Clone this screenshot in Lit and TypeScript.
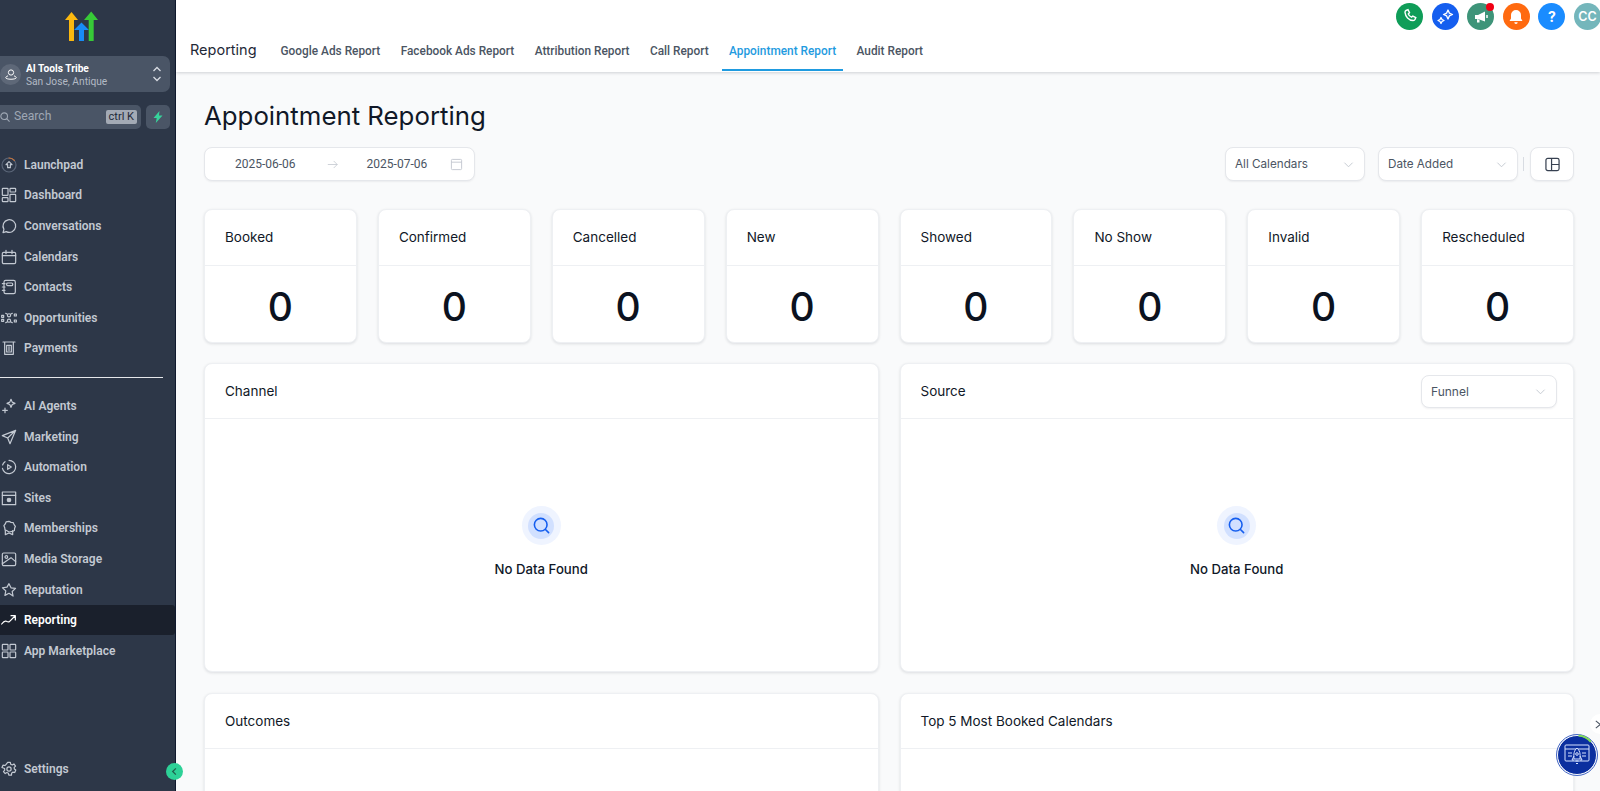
import { LitElement, html, css, svg } from 'lit';
import { customElement } from 'lit/decorators.js';

const ico = (body: unknown) => html`<svg class="ico" viewBox="0 0 24 24" fill="none" stroke="currentColor" stroke-width="1.8" stroke-linecap="round" stroke-linejoin="round">${body}</svg>`;

const topNav = [
  { label: 'Launchpad', icon: svg`<circle cx="12" cy="12" r="10.500" stroke="#5b6678"/><path d="M12 1.500a10.500 10.500 0 0 1 8 3.600" stroke="#c9743a"/><path d="M12 7l-4.500 4.500H10V16h4v-4.500h2.500z"/>` },
  { label: 'Dashboard', icon: svg`<rect x="2" y="2" width="8.500" height="10.500" rx="1"/><rect x="13.500" y="2" width="8.500" height="5.500" rx="1"/><rect x="2" y="16" width="8.500" height="6" rx="1"/><rect x="13.500" y="11" width="8.500" height="11" rx="1"/>` },
  { label: 'Conversations', icon: svg`<path d="M3 22l1.400-5A9.500 9.500 0 1 1 8 20.400z"/>` },
  { label: 'Calendars', icon: svg`<rect x="2" y="5" width="20" height="17" rx="2"/><path d="M2 10h20M7.500 2v5M16.500 2v5"/>` },
  { label: 'Contacts', icon: svg`<rect x="4.500" y="2" width="17" height="20" rx="2.500"/><rect x="8.500" y="6" width="9" height="4" rx="1.500"/><path d="M2 7h4M2 12h4M2 17h4"/>` },
  { label: 'Opportunities', icon: svg`<circle cx="12" cy="8" r="2.400"/><circle cx="12" cy="16" r="2.400"/><path d="M1 8h3v3H1zM1 14h3v3H1zM20 6h3v3h-3zM20 15h3v3h-3zM7 5l2 1M15 6l2-1M7 19l2-1M15 18l2 1"/>` },
  { label: 'Payments', icon: svg`<path d="M3 3h18M5.500 3v18.500h13V3"/><rect x="8.500" y="8" width="7" height="10"/><path d="M12 10v6"/>` },
];

const lowerNav = [
  { label: 'AI Agents', icon: svg`<path d="M15 2l1.800 4.200L21 8l-4.200 1.800L15 14l-1.800-4.200L9 8l4.200-1.800zM6 15v7M2.500 18.500h7"/>` },
  { label: 'Marketing', icon: svg`<path d="M22 2L2 10l8 3.500L13.500 22zM22 2L10 13.500"/>` },
  { label: 'Automation', icon: svg`<path d="M12 2a10 10 0 1 1-9.800 12M2.400 9A10 10 0 0 1 6 4"/><path d="M10 8.500l5.500 3.500-5.500 3.500z"/>` },
  { label: 'Sites', icon: svg`<rect x="2" y="3" width="20" height="19"/><path d="M2 8h20"/><circle cx="12" cy="15" r="2.600" fill="currentColor"/>` },
  { label: 'Memberships', icon: svg`<path d="M12 2l3 1.600 3.400.3 1.200 3 2 2.600-1.200 3-.3 3.300-3 1.400L12 18l-3-1.800-3-1.400-.4-3.300-1.200-3 2-2.600 1.200-3L12 2z"/><path d="M6.500 16v6l5.500-2.500L17.500 22v-6"/>` },
  { label: 'Media Storage', icon: svg`<rect x="2" y="3" width="20" height="19" rx="2"/><circle cx="8" cy="9" r="2"/><path d="M2 19l13-9 7 6"/>` },
  { label: 'Reputation', icon: svg`<path d="M12 2.500l3 6.200 6.800.9-5 4.700 1.300 6.800L12 17l-6.100 3.100 1.300-6.800-5-4.700 6.800-.9z"/>` },
  { label: 'Reporting', active: true, icon: svg`<path d="M1 18c3-4 5-5 7-4s3 2 5 0l8-8M15 5.500h6.500V12"/>` },
  { label: 'App Marketplace', icon: svg`<rect x="2" y="2" width="8.500" height="8.500" rx="1"/><rect x="13.500" y="2" width="8.500" height="8.500" rx="1"/><rect x="2" y="13.500" width="8.500" height="8.500" rx="1"/><rect x="13.500" y="13.500" width="8.500" height="8.500" rx="1"/>` },
];

const tabs = ['Google Ads Report', 'Facebook Ads Report', 'Attribution Report', 'Call Report', 'Appointment Report', 'Audit Report'];
const stats = ['Booked', 'Confirmed', 'Cancelled', 'New', 'Showed', 'No Show', 'Invalid', 'Rescheduled'];

const chevron = html`<svg class="chev" viewBox="0 0 12 12" fill="none" stroke="currentColor" stroke-width="1"><path d="M1.500 4l4.500 4.500L10.500 4"/></svg>`;

const actions = [
  { color: '#0f9d58', icon: svg`<path d="M8 5.500l2-.8 1.500 3-1.200 1.200c.6 1.500 1.800 2.700 3.300 3.300l1.200-1.200 3 1.500-.8 2c-.3.800-1 1-1.800 1C10.500 15.300 7.500 11.500 7 7.300c0-.8.300-1.500 1-1.800z" fill="none" stroke="#fff" stroke-width="1.400"/>` },
  { color: '#155eef', icon: svg`<path d="M15 5l1.400 3.100L19.500 9.500l-3.100 1.400L15 14l-1.400-3.100L10.500 9.500l3.100-1.400zM8 12.500l1 2 2 1-2 1-1 2-1-2-2-1 2-1z" fill="#2f6ff2" stroke="#fff" stroke-width="1.300" stroke-linejoin="round"/>` },
  { color: '#3e9479', dot: true, icon: svg`<path d="M6 10h3l7-3.500v10L9 14H6zM8 14v3.500h2.500V15" fill="#fff"/><path d="M18 10v3" stroke="#fff" stroke-width="1.500"/>` },
  { color: '#ff6a10', icon: svg`<path d="M12 5a5 5 0 0 1 5 5v3.500l1.500 2.500h-13L7 13.500V10a5 5 0 0 1 5-5zM10.300 17.300h3.400a1.700 1.700 0 0 1-3.400 0z" fill="#fff"/>` },
];

@customElement('app-root')
export class AppRoot extends LitElement {
  static styles = css`
    :host {
      display: block;
      height: 791px;
      overflow: hidden;
      font-family: Inter, 'Liberation Sans', sans-serif;
      color: #111827;
    }
    * { box-sizing: border-box; }
    .page { display: flex; height: 791px; }

    .side {
      width: 176px;
      flex: none;
      background: #2d3748;
      border-right: 1px solid #10192e;
      display: flex;
      flex-direction: column;
      position: relative;
      font-family: Roboto, 'Liberation Sans', sans-serif;
    }
    .logo { display: block; margin: 10px 0 0 64px; width: 36px; height: 33px; flex: none; }
    .loc {
      margin: 13px 5px 0 -8px;
      height: 36px;
      background: #4a5566;
      border-radius: 7px;
      display: flex;
      align-items: center;
      padding-left: 8px;
      padding-right: 6px;
      flex: none;
    }
    .loc-av {
      width: 21px; height: 21px; border-radius: 50%;
      background: #5e6878; color: #fff;
      display: flex; align-items: center; justify-content: center;
      flex: none;
    }
    .loc-av svg { width: 12px; height: 12px; }
    .loc-text { flex: 1; margin-left: 5px; padding-top: 2px; line-height: 13px; font-size: 10.200px; white-space: nowrap; }
    .loc-name { color: #fff; font-weight: 700; }
    .loc-sub { color: #b3bac5; }
    .updown { width: 10px; height: 16px; color: #d7dbe2; margin-right: 2px; }
    .search-row { display: flex; gap: 5px; margin: 13px 5px 0 -8px; height: 24px; flex: none; }
    .search {
      flex: 1; background: #4a5566; border-radius: 5px;
      display: flex; align-items: center;
      padding: 0 4px 0 8px; color: #9ea7b4; font-size: 12.200px;
    }
    .search svg { width: 10px; height: 10px; flex: none; margin-right: 4px; }
    .search span { flex: 1; line-height: 23px; height: 24px; }
    .search kbd {
      font: 11px Roboto, sans-serif; background: #a3aab5; color: #1f2937;
      padding: 0 3px; height: 14px; line-height: 14px; border-radius: 2px;
    }
    .bolt {
      width: 24px; background: #4a5566; border-radius: 5px;
      display: flex; align-items: center; justify-content: center;
    }
    .bolt svg { width: 12px; height: 12px; }
    .nav { display: flex; flex-direction: column; flex: none; }
    .nav.first { margin-top: 20.500px; }
    .rule { height: 1px; background: #e5e7eb; margin: 13px 12px 0 0; flex: none; }
    .rule + .nav { margin-top: 13px; }
    .item {
      height: 30.600px;
      display: flex; align-items: center;
      padding-left: 1px;
      color: #c3c9d2;
      font-size: 12px;
      font-weight: 600;
      white-space: nowrap;
    }
    .item.on { background: #1a202c; color: #fff; border-radius: 0 3px 3px 0; }
    .ico { width: 16px; height: 16px; flex: none; margin-right: 7px; }
    .settings { margin-top: auto; margin-bottom: 7px; }
    .toggle {
      position: absolute; left: 166px; top: 763px;
      width: 17px; height: 17px; border-radius: 50%;
      background: #2dd197; color: #1f5f4c;
      display: flex; align-items: center; justify-content: center;
      z-index: 3;
    }
    .toggle svg { width: 9px; height: 9px; }

    .right { flex: 1; min-width: 0; display: flex; flex-direction: column; background: #f9fafb; }
    .head {
      height: 72px; flex: none; background: #fff;
      box-shadow: 0 1px 3px rgba(16, 24, 40, 0.18);
      position: relative; z-index: 1;
    }
    .actions { display: flex; justify-content: flex-end; gap: 8.600px; margin-right: -1px; padding-top: 3px; height: 30px; }
    .act {
      width: 27px; height: 27px; border-radius: 50%; flex: none;
      display: flex; align-items: center; justify-content: center;
      position: relative; color: #fff; font-size: 14px; font-weight: 700;
    }
    .act svg { width: 24px; height: 24px; }
    .act .dot {
      position: absolute; top: 0; right: 0; width: 8px; height: 8px;
      border-radius: 50%; background: #f00014;
    }
    .act.user { background: #74b6bb; font-size: 12.500px; font-weight: 600; }
    .act.help { background: #1a8cff; }
    .tabbar { display: flex; align-items: stretch; height: 40px; margin-top: 1px; padding-left: 14px; }
    .crumb { font-size: 14.500px; color: #1f2937; line-height: 38px; margin-right: 17px; font-weight: 400; }
    .tab {
      padding: 0 7px; margin-right: 6.400px;
      font: 500 11.850px/40px Roboto, sans-serif;
      color: #4b5563; white-space: nowrap;
    }
    .tab.on { color: #1f9be0; border-bottom: 2px solid #1f9be0; }

    .main { flex: 1; min-height: 0; overflow: hidden; padding: 26px 26px 0 28px; }
    h1 { margin: 0; font-size: 25.800px; font-weight: 400; line-height: 36px; color: #111827; }
    .filters { display: flex; align-items: center; margin-top: 13px; }
    .box {
      height: 34px; background: #fff; border: 1px solid #e5e7eb; border-radius: 8px;
      box-shadow: 0 1px 2px rgba(16, 24, 40, 0.06);
      display: flex; align-items: center; font-size: 11.700px; color: #4b5563;
      white-space: nowrap;
    }
    .dates { width: 271px; padding-left: 30px; padding-right: 11px; font-family: Roboto, sans-serif; font-size: 12px; }
    .dates .to { width: 11px; height: 11px; margin: 0 29px 0 31px; color: #c2c7cf; flex: none; }
    .dates .cal { width: 13px; height: 13px; margin-left: auto; color: #c2c7cf; flex: none; }
    .select { width: 140px; padding: 0 10px 0 9px; justify-content: space-between; }
    .chev { width: 11px; height: 11px; color: #c2c7cf; flex: none; }
    .select.a { margin-left: auto; }
    .select.b { margin-left: 13px; }
    .sep { width: 1px; height: 14px; background: #d8dce2; margin: 0 6px 0 5px; }
    .layout { width: 44px; justify-content: center; color: #374151; }
    .layout svg { width: 15px; height: 15px; }

    .stats { display: grid; grid-template-columns: repeat(8, 1fr); gap: 21px; margin-top: 28px; }
    .card {
      background: #fff; border: 1px solid #eef0f3; border-radius: 8px;
      box-shadow: 0 1px 3px rgba(16, 24, 40, 0.12);
    }
    .card-head {
      height: 55px; display: flex; align-items: center; justify-content: space-between;
      padding: 0 16px 0 20px; border-bottom: 1px solid #eef0f3;
      font-size: 13.500px; font-weight: 400; color: #111827;
    }
    .stats .card-head { height: 56px; padding-bottom: 2px; }
    .num { height: 76px; padding-top: 5px; display: flex; align-items: center; justify-content: center; font-size: 39px; font-weight: 500; color: #0b1220; }
    .panels { display: grid; grid-template-columns: 1fr 1fr; gap: 21px; margin-top: 20px; }
    .panel-body {
      height: 252px; display: flex; flex-direction: column; align-items: center;
      padding-top: 87px;
    }
    .panel-head-select { width: 136px; height: 33px; font-size: 12px; }
    .halo {
      width: 39px; height: 39px; border-radius: 50%; background: #eff4ff;
      display: flex; align-items: center; justify-content: center;
    }
    .halo i {
      width: 26px; height: 26px; border-radius: 50%; background: #d1e0ff;
      display: flex; align-items: center; justify-content: center; color: #155eef;
    }
    .halo svg { width: 19px; height: 19px; }
    .empty { margin-top: 16px; font-size: 13.200px; font-weight: 500; color: #101828; }

    .widget {
      position: absolute; left: 1557px; top: 735px; width: 40px; height: 40px;
      border-radius: 50%; background: #0b2f9f; border: 1.500px solid #fff;
      outline: 1px solid #4467c4; color: #d7e3ff; z-index: 4;
      display: flex; align-items: center; justify-content: center;
    }
    .widget svg { width: 30px; height: 30px; }
    .widget .ring { position: absolute; inset: -2px; width: 41px; height: 41px; }
    .peek {
      position: absolute; left: 1590px; top: 714px; width: 20px; height: 20px;
      border-radius: 50%; background: #fff; color: #4b5563; z-index: 3;
      display: flex; align-items: center; padding-left: 4px;
    }
    .peek svg { width: 9px; height: 9px; }
  `;

  private navItem(n: { label: string; icon: unknown; active?: boolean }) {
    return html`<div class="item ${n.active ? 'on' : ''}">${ico(n.icon)}${n.label}</div>`;
  }

  private panel(title: string, extra?: unknown, empty = true) {
    return html`
      <div class="card">
        <div class="card-head">${title}${extra}</div>
        <div class="panel-body">
          ${empty
            ? html`<div class="halo"><i><svg viewBox="0 0 24 24" fill="none" stroke="currentColor" stroke-width="2" stroke-linecap="round"><circle cx="11" cy="11" r="8"/><path d="M17 17l4 4"/></svg></i></div>
                <div class="empty">No Data Found</div>`
            : ''}
        </div>
      </div>
    `;
  }

  render() {
    return html`
      <div class="page">
        <aside class="side">
          <svg class="logo" viewBox="0 0 36 33">
            <path d="M7.500 2L14 10h-4v20.500a.5.5 0 0 1-.5.5h-4a.5.5 0 0 1-.5-.5V10H1z" fill="#fbb80f"/>
            <path d="M17.500 12.500L25 20h-5v11h-5V20h-5z" fill="#188bf6"/>
            <path d="M27.200 1.500L34 10h-4.300v20.500a.5.5 0 0 1-.5.5h-4a.5.5 0 0 1-.5-.5V10H20z" fill="#37ca37"/>
          </svg>
          <div class="loc">
            <div class="loc-av"><svg viewBox="0 0 16 16" fill="none" stroke="currentColor" stroke-width="1.300"><circle cx="8" cy="6" r="3.500"/><path d="M4 10.500c-2 .7-3 1.500-3 2.500 0 1 3 2 7 2s7-1 7-2c0-1-1-1.800-3-2.500"/></svg></div>
            <div class="loc-text">
              <div class="loc-name">AI Tools Tribe</div>
              <div class="loc-sub">San Jose, Antique</div>
            </div>
            <svg class="updown" viewBox="0 0 10 16" fill="none" stroke="currentColor" stroke-width="1.300"><path d="M1.500 5L5 1.500 8.500 5M1.500 11L5 14.500 8.500 11"/></svg>
          </div>
          <div class="search-row">
            <div class="search">
              <svg viewBox="0 0 12 12" fill="none" stroke="currentColor" stroke-width="1.300"><circle cx="5" cy="5" r="4"/><path d="M8 8l3.500 3.500"/></svg>
              <span>Search</span><kbd>ctrl K</kbd>
            </div>
            <div class="bolt"><svg viewBox="0 0 12 12"><path d="M7.500 0L1.500 7h3.200L3.800 12l6.700-7.500H7z" fill="#37d39b"/></svg></div>
          </div>
          <div class="nav first">${topNav.map((n) => this.navItem(n))}</div>
          <div class="rule"></div>
          <div class="nav second">${lowerNav.map((n) => this.navItem(n))}</div>
          <div class="item settings">
            ${ico(svg`<circle cx="12" cy="12" r="3.200"/><path d="M10 2h4l.6 2.900 2.300 1 2.500-1.500 2.400 3.200-2 2 .2 2.400 2.200 1.600-1.600 3.700-2.900-.7-1.800 1.700-.2 2.900h-4l-.7-2.900-2.200-1-2.500 1.500-2.600-3 1.900-2.200-.2-2.400L1.400 9.800 3 6.200l2.900.6L7.700 5.100z"/>`)}
            Settings
          </div>
          <div class="toggle"><svg viewBox="0 0 10 10" fill="none" stroke="currentColor" stroke-width="1.400"><path d="M6.500 1.500L3 5l3.500 3.500"/></svg></div>
        </aside>

        <div class="right">
          <header class="head">
            <div class="actions">
              ${actions.map((a) => html`
                <div class="act" style="background:${a.color}">
                  <svg viewBox="0 0 24 24">${a.icon}</svg>
                  ${a.dot ? html`<span class="dot"></span>` : ''}
                </div>
              `)}
              <div class="act help">?</div>
              <div class="act user">CC</div>
            </div>
            <div class="tabbar">
              <div class="crumb">Reporting</div>
              ${tabs.map((t) => html`<div class="tab ${t === 'Appointment Report' ? 'on' : ''}">${t}</div>`)}
            </div>
          </header>

          <main class="main">
            <h1>Appointment Reporting</h1>
            <div class="filters">
              <div class="box dates">
                <span>2025-06-06</span>
                <svg class="to" viewBox="0 0 14 14" fill="none" stroke="currentColor" stroke-width="1"><path d="M1 7h12M8.500 2.500L13 7l-4.500 4.500"/></svg>
                <span>2025-07-06</span>
                <svg class="cal" viewBox="0 0 14 14" fill="none" stroke="currentColor" stroke-width="1"><rect x="1.500" y="1.500" width="11" height="11" rx="1"/><path d="M1.500 4.500h11"/></svg>
              </div>
              <div class="box select a">All Calendars ${chevron}</div>
              <div class="box select b">Date Added ${chevron}</div>
              <div class="sep"></div>
              <div class="box layout"><svg viewBox="0 0 16 16" fill="none" stroke="currentColor" stroke-width="1.300"><rect x="1" y="1.500" width="14" height="13" rx="2"/><path d="M7 1.500v13M7 8h8"/></svg></div>
            </div>

            <div class="stats">
              ${stats.map((s) => html`
                <div class="card">
                  <div class="card-head">${s}</div>
                  <div class="num">0</div>
                </div>
              `)}
            </div>

            <div class="panels">
              ${this.panel('Channel')}
              ${this.panel('Source', html`<div class="box select panel-head-select">Funnel ${chevron}</div>`)}
              ${this.panel('Outcomes', '', false)}
              ${this.panel('Top 5 Most Booked Calendars', '', false)}
            </div>
          </main>
        </div>
      </div>

      <div class="peek"><svg viewBox="0 0 10 10" fill="none" stroke="currentColor" stroke-width="1.200"><path d="M2 1l5 4-5 4"/></svg></div>
      <div class="widget">
        <svg class="ring" viewBox="0 0 40 40" fill="none"><path d="M22 1.500a18.500 18.500 0 0 1 12 6" stroke="#7ed957" stroke-width="2"/></svg>
        <svg viewBox="0 0 30 30" fill="none" stroke="currentColor" stroke-width="1">
          <rect x="3" y="5" width="24" height="16" rx="1"/>
          <path d="M3 9h24M6 13h4M6 16h4M20 13h4M20 16h4"/>
          <path d="M15 8c3 2.500 3.500 6 3 11h-6c-.5-5 0-8.500 3-11z" fill="#0b2f9f"/>
          <circle cx="15" cy="14" r="1.300"/>
          <path d="M12 16l-2 4 2 0M18 16l2 4-2 0M13.500 21h3M14 23.500h2"/>
        </svg>
      </div>
    `;
  }
}
